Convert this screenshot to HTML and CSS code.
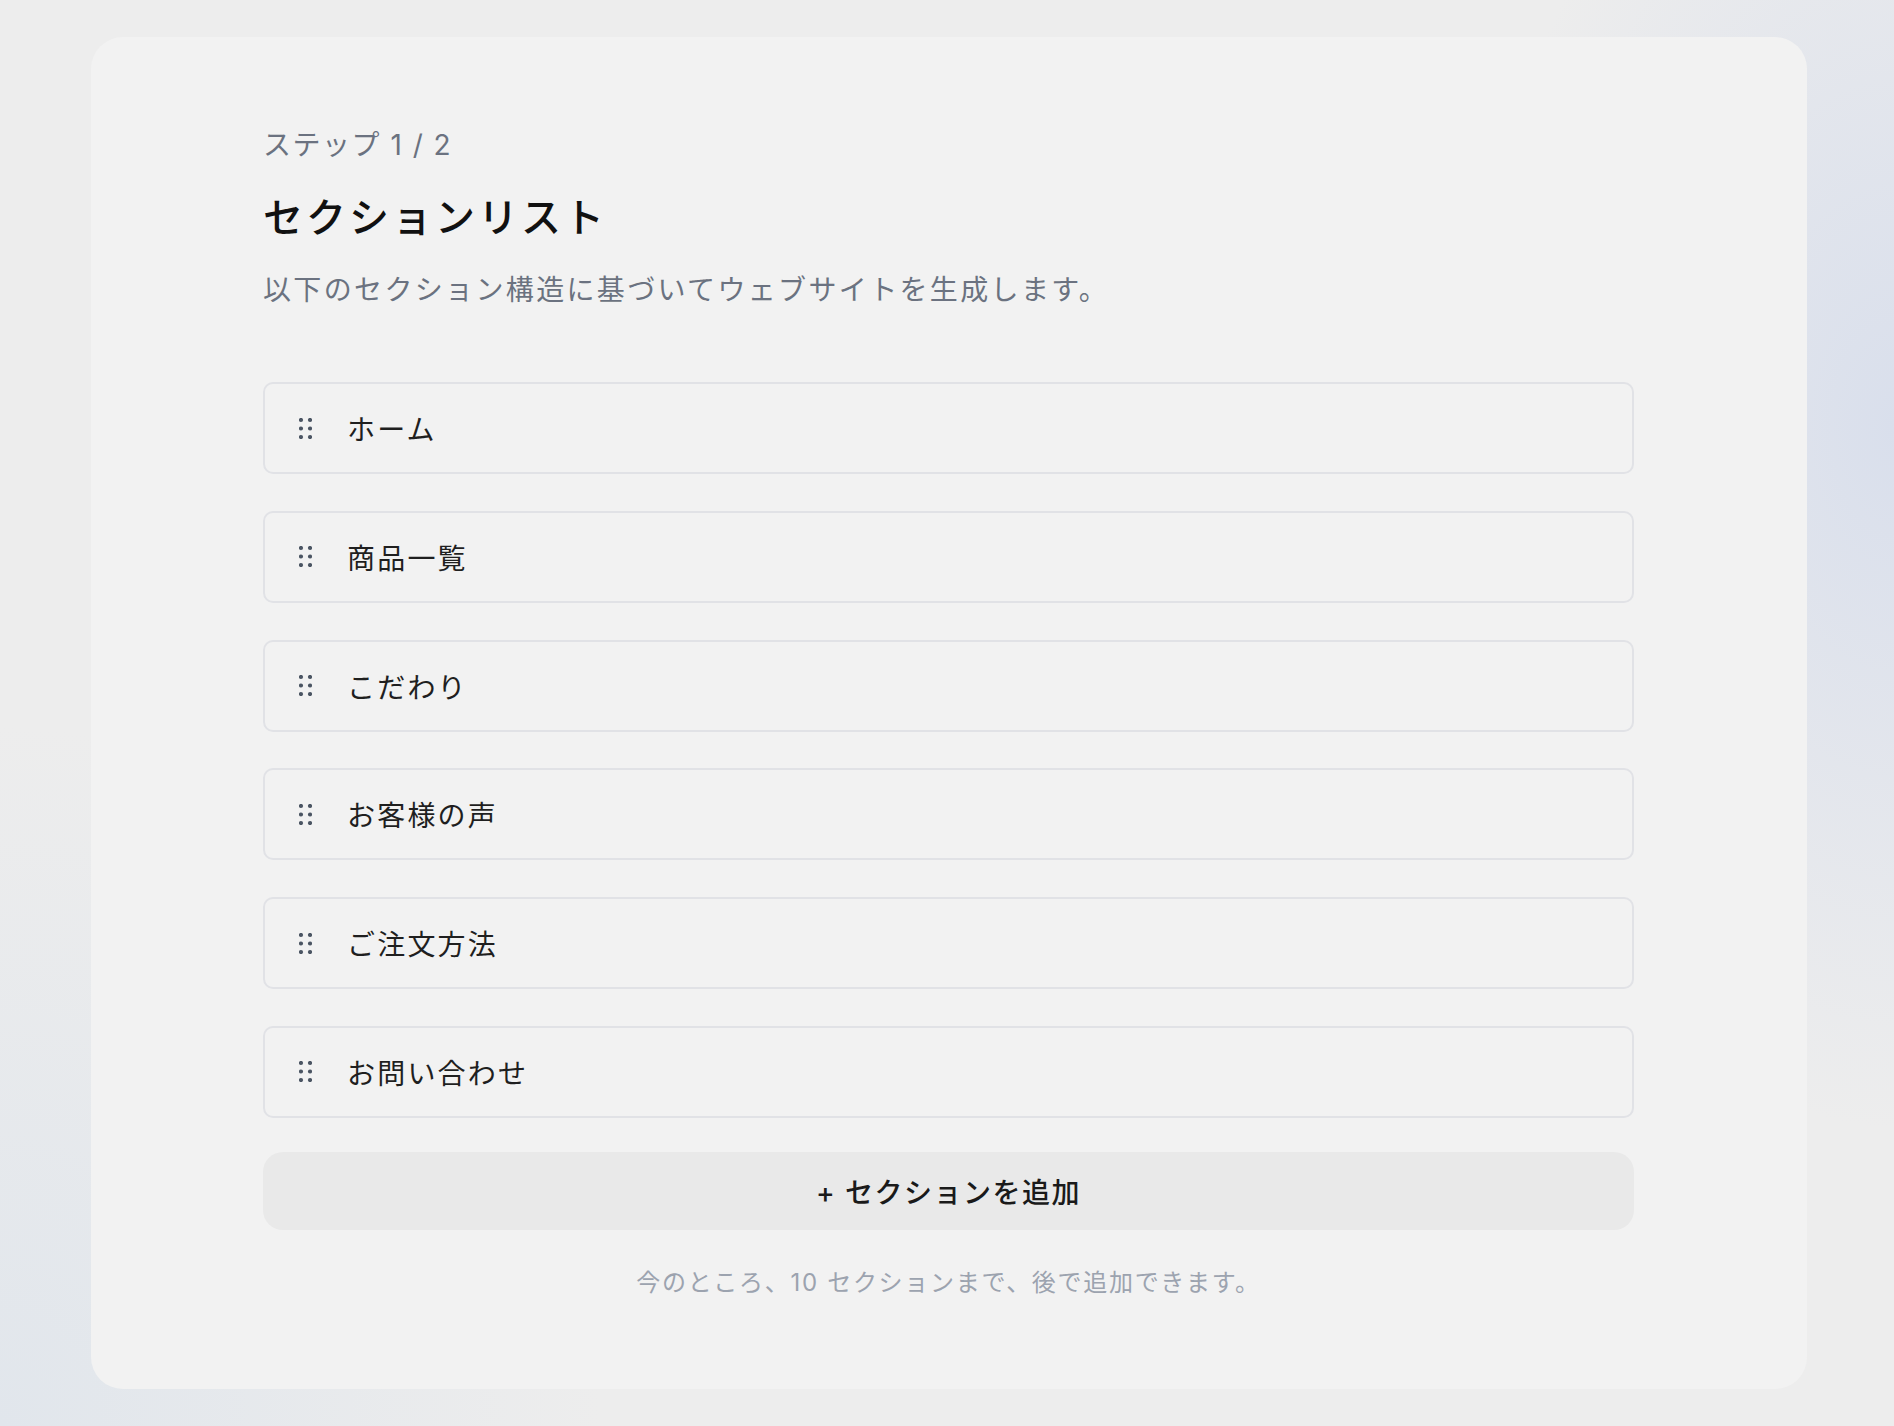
FILE: index.html
```html
<!DOCTYPE html>
<html lang="ja">
<head>
  <meta charset="UTF-8" />
  <meta name="viewport" content="width=device-width, initial-scale=1.0"/>
  <title>セクションリスト</title>
  <link rel="stylesheet" href="styles.css">
</head>
<body>
  <main class="card">
    <div class="step">ステップ 1 / 2</div>
    <h1 class="title">セクションリスト</h1>
    <p class="desc">以下のセクション構造に基づいてウェブサイトを生成します。</p>

    <ul class="sections">
      <li class="section-row">
        <svg class="handle" width="13" height="21" viewBox="0 0 13 21"><circle cx="2" cy="2" r="2.1"/><circle cx="11" cy="2" r="2.1"/><circle cx="2" cy="10.5" r="2.1"/><circle cx="11" cy="10.5" r="2.1"/><circle cx="2" cy="19" r="2.1"/><circle cx="11" cy="19" r="2.1"/></svg>
        <span>ホーム</span>
      </li>
      <li class="section-row">
        <svg class="handle" width="13" height="21" viewBox="0 0 13 21"><circle cx="2" cy="2" r="2.1"/><circle cx="11" cy="2" r="2.1"/><circle cx="2" cy="10.5" r="2.1"/><circle cx="11" cy="10.5" r="2.1"/><circle cx="2" cy="19" r="2.1"/><circle cx="11" cy="19" r="2.1"/></svg>
        <span>商品一覧</span>
      </li>
      <li class="section-row">
        <svg class="handle" width="13" height="21" viewBox="0 0 13 21"><circle cx="2" cy="2" r="2.1"/><circle cx="11" cy="2" r="2.1"/><circle cx="2" cy="10.5" r="2.1"/><circle cx="11" cy="10.5" r="2.1"/><circle cx="2" cy="19" r="2.1"/><circle cx="11" cy="19" r="2.1"/></svg>
        <span>こだわり</span>
      </li>
      <li class="section-row">
        <svg class="handle" width="13" height="21" viewBox="0 0 13 21"><circle cx="2" cy="2" r="2.1"/><circle cx="11" cy="2" r="2.1"/><circle cx="2" cy="10.5" r="2.1"/><circle cx="11" cy="10.5" r="2.1"/><circle cx="2" cy="19" r="2.1"/><circle cx="11" cy="19" r="2.1"/></svg>
        <span>お客様の声</span>
      </li>
      <li class="section-row">
        <svg class="handle" width="13" height="21" viewBox="0 0 13 21"><circle cx="2" cy="2" r="2.1"/><circle cx="11" cy="2" r="2.1"/><circle cx="2" cy="10.5" r="2.1"/><circle cx="11" cy="10.5" r="2.1"/><circle cx="2" cy="19" r="2.1"/><circle cx="11" cy="19" r="2.1"/></svg>
        <span>ご注文方法</span>
      </li>
      <li class="section-row">
        <svg class="handle" width="13" height="21" viewBox="0 0 13 21"><circle cx="2" cy="2" r="2.1"/><circle cx="11" cy="2" r="2.1"/><circle cx="2" cy="10.5" r="2.1"/><circle cx="11" cy="10.5" r="2.1"/><circle cx="2" cy="19" r="2.1"/><circle cx="11" cy="19" r="2.1"/></svg>
        <span>お問い合わせ</span>
      </li>
    </ul>

    <button type="button" class="add-btn">+ セクションを追加</button>
    <p class="note">今のところ、10 セクションまで、後で追加できます。</p>
  </main>
</body>
</html>
```

FILE: styles.css
```css
html, body { height: 100%; }
body {
  margin: 0;
  padding: 37px 87px 0 91px;
  box-sizing: border-box;
  font-family: Inter, "Noto Sans CJK JP", sans-serif;
  background:
    radial-gradient(ellipse 420px 700px at 100% 30%, #d9dfec 0%, rgba(217,223,236,0) 100%),
    radial-gradient(ellipse 600px 700px at 0% 100%, #e1e6ec 0%, rgba(225,230,236,0) 100%),
    #ededed;
}

.card {
  height: 1352px;
  box-sizing: border-box;
  padding: 88px 173px 0 172px;
  background: #f2f2f2;
  border-radius: 32px;
}

.step {
  font-size: 28px;
  line-height: 40px;
  letter-spacing: 1.5px;
  color: #6b7280;
}

.title {
  margin: 25px 0 0;
  font-size: 40px;
  line-height: 56px;
  font-weight: 500;
  letter-spacing: 3px;
  color: #111;
}

.desc {
  margin: 24px 0 0;
  font-size: 28px;
  line-height: 40px;
  letter-spacing: 2.35px;
  color: #6b7280;
}

.sections {
  list-style: none;
  margin: 72px 0 0;
  padding: 0;
  display: flex;
  flex-direction: column;
  gap: 36.8px;
}

.section-row {
  height: 92px;
  box-sizing: border-box;
  display: flex;
  align-items: center;
  gap: 35px;
  padding: 0 34px;
  border: 2px solid #e1e2e6;
  border-radius: 10px;
  font-size: 28px;
  letter-spacing: 2.2px;
  color: #1f1f1f;
}

.handle { fill: #4b5563; flex: none; }

.add-btn {
  display: block;
  width: 100%;
  height: 78px;
  margin-top: 34px;
  border: none;
  border-radius: 20px;
  background: #e9e9e9;
  font-family: inherit;
  font-size: 28px;
  font-weight: 500;
  letter-spacing: 1.5px;
  color: #1a1a1a;
}

.note {
  margin: 35px 0 0;
  text-align: center;
  font-size: 24px;
  line-height: 36px;
  letter-spacing: 1.7px;
  color: #9ca3af;
}
```
